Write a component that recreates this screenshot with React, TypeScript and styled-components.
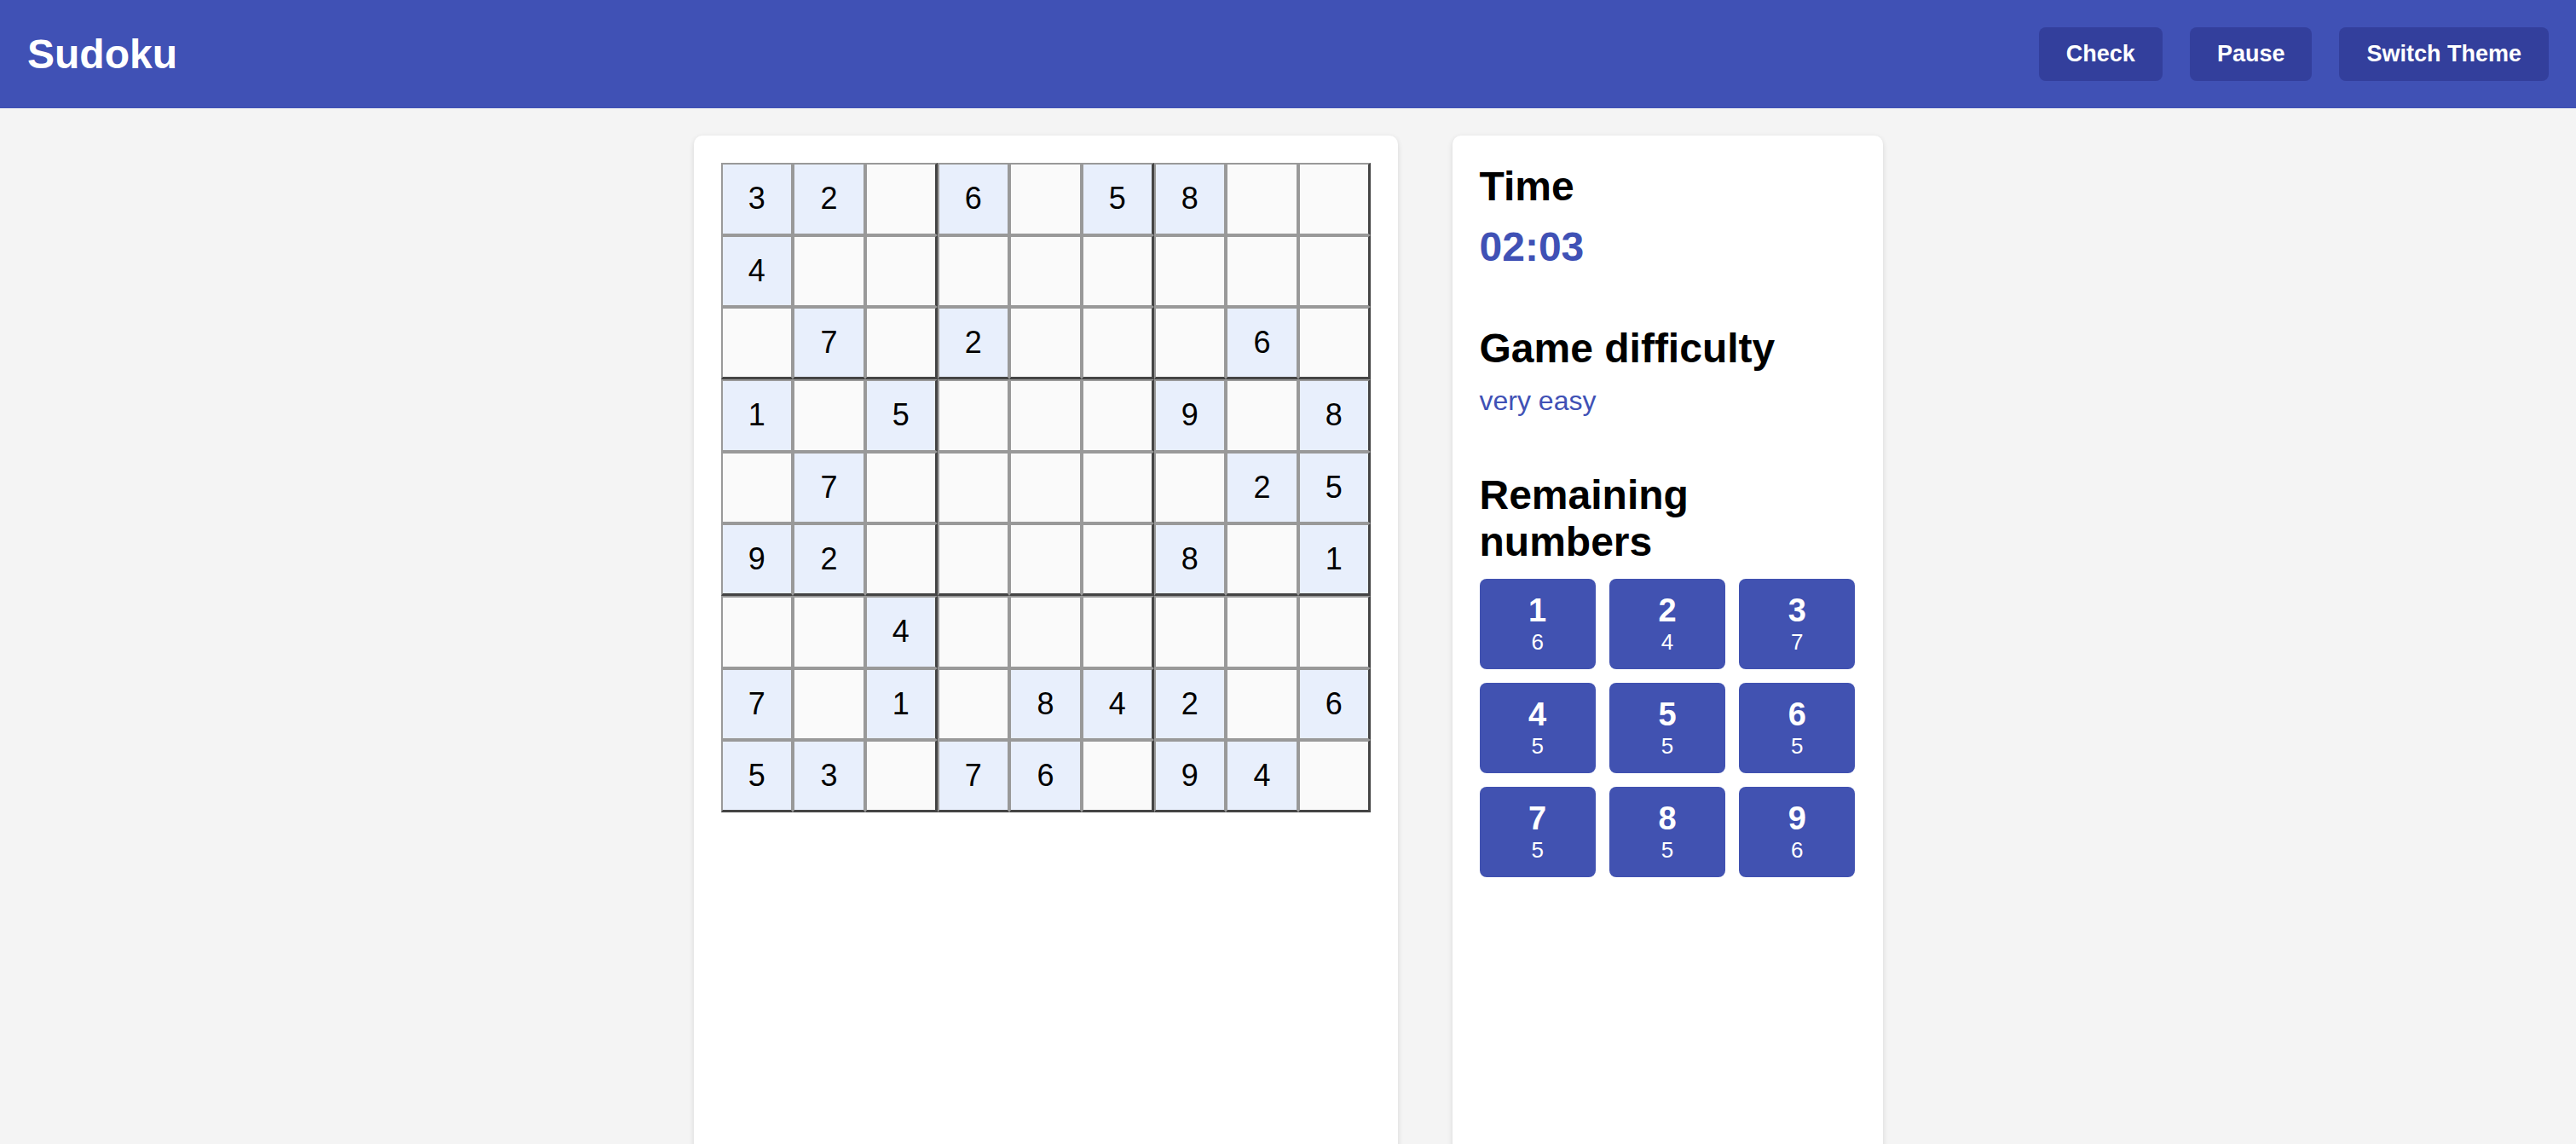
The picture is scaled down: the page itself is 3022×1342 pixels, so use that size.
import React from "react";
import styled, { createGlobalStyle } from "styled-components";

const GlobalStyle = createGlobalStyle`
  html, body {
    margin: 0;
    padding: 0;
    height: 100%;
    overflow: hidden;
    background: #f4f4f4;
    font-family: "Liberation Sans", Arial, sans-serif;
  }
  * { box-sizing: border-box; }
`;

const Page = styled.div`
  height: 100vh;
  display: flex;
  flex-direction: column;
  overflow: hidden;
`;

const Header = styled.header`
  display: flex;
  align-items: center;
  justify-content: space-between;
  padding: 32px;
  background: #4051b5;
  flex-shrink: 0;
`;

const Title = styled.h1`
  margin: 0;
  font-size: 48px;
  font-weight: 700;
  color: #ffffff;
  line-height: normal;
`;

const Actions = styled.div`
  display: flex;
  gap: 32px;
`;

const HeaderButton = styled.button`
  font-family: "Liberation Sans", Arial, sans-serif;
  font-size: 27px;
  font-weight: 700;
  line-height: normal;
  color: #ffffff;
  background: #333f9c;
  border: none;
  border-radius: 8px;
  padding: 16px 32px;
  cursor: pointer;
`;

const Main = styled.main`
  flex: 1;
  display: flex;
  justify-content: center;
  align-items: flex-start;
  gap: 64px;
  padding-top: 32px;
  overflow: hidden;
`;

const Card = styled.section<{ $width: number }>`
  width: ${(p) => p.$width}px;
  min-height: 1300px;
  background: #ffffff;
  border-radius: 10px;
  box-shadow: 0 2px 6px rgba(0, 0, 0, 0.12);
  padding: 32px;
`;

const Board = styled.div`
  display: grid;
  grid-template-columns: repeat(9, 1fr);
  width: 100%;
`;

const Cell = styled.div<{ $given: boolean; $boxRight: boolean; $boxBottom: boolean }>`
  aspect-ratio: 1 / 1;
  display: flex;
  align-items: center;
  justify-content: center;
  border: 2px solid #999999;
  border-right: ${(p) => (p.$boxRight ? "3px solid #444444" : "2px solid #999999")};
  border-bottom: ${(p) => (p.$boxBottom ? "3px solid #444444" : "2px solid #999999")};
  background: ${(p) => (p.$given ? "#e8effc" : "#fafafa")};
  font-size: 36px;
  color: #000000;
`;

const Section = styled.div`
  margin-bottom: 64px;
`;

const Heading = styled.h2`
  margin: 0 0 16px;
  font-size: 48px;
  font-weight: 700;
  line-height: normal;
  color: #000000;
`;

const Timer = styled.div`
  font-size: 48px;
  font-weight: 700;
  line-height: normal;
  color: #4051b5;
`;

const Difficulty = styled.div`
  font-size: 32px;
  line-height: normal;
  color: #4051b5;
`;

const NumberGrid = styled.div`
  display: grid;
  grid-template-columns: repeat(3, 1fr);
  gap: 16px;
`;

const NumberButton = styled.button`
  font-family: "Liberation Sans", Arial, sans-serif;
  display: flex;
  flex-direction: column;
  align-items: center;
  padding: 16px 0;
  border: none;
  border-radius: 8px;
  background: #4152b1;
  color: #ffffff;
  cursor: pointer;
`;

const BigNumber = styled.span`
  font-size: 38px;
  font-weight: 700;
  line-height: normal;
`;

const Count = styled.span`
  font-size: 26px;
  line-height: normal;
`;

const puzzle: number[][] = [
  [3, 2, 0, 6, 0, 5, 8, 0, 0],
  [4, 0, 0, 0, 0, 0, 0, 0, 0],
  [0, 7, 0, 2, 0, 0, 0, 6, 0],
  [1, 0, 5, 0, 0, 0, 9, 0, 8],
  [0, 7, 0, 0, 0, 0, 0, 2, 5],
  [9, 2, 0, 0, 0, 0, 8, 0, 1],
  [0, 0, 4, 0, 0, 0, 0, 0, 0],
  [7, 0, 1, 0, 8, 4, 2, 0, 6],
  [5, 3, 0, 7, 6, 0, 9, 4, 0],
];

export default function App() {
  const counts = Array.from({ length: 9 }, (_, i) => {
    const n = i + 1;
    let placed = 0;
    puzzle.forEach((row) => row.forEach((v) => { if (v === n) placed++; }));
    return { n, remaining: 9 - placed };
  });

  return (
    <Page>
      <GlobalStyle />
      <Header>
        <Title>Sudoku</Title>
        <Actions>
          <HeaderButton>Check</HeaderButton>
          <HeaderButton>Pause</HeaderButton>
          <HeaderButton>Switch Theme</HeaderButton>
        </Actions>
      </Header>
      <Main>
        <Card $width={826}>
          <Board>
            {puzzle.map((row, r) =>
              row.map((v, c) => (
                <Cell
                  key={`${r}-${c}`}
                  $given={v !== 0}
                  $boxRight={c % 3 === 2}
                  $boxBottom={r % 3 === 2}
                >
                  {v !== 0 ? v : ""}
                </Cell>
              ))
            )}
          </Board>
        </Card>
        <Card $width={505}>
          <Section>
            <Heading>Time</Heading>
            <Timer>02:03</Timer>
          </Section>
          <Section>
            <Heading>Game difficulty</Heading>
            <Difficulty>very easy</Difficulty>
          </Section>
          <div>
            <Heading>Remaining numbers</Heading>
            <NumberGrid>
              {counts.map(({ n, remaining }) => (
                <NumberButton key={n}>
                  <BigNumber>{n}</BigNumber>
                  <Count>{remaining}</Count>
                </NumberButton>
              ))}
            </NumberGrid>
          </div>
        </Card>
      </Main>
    </Page>
  );
}
